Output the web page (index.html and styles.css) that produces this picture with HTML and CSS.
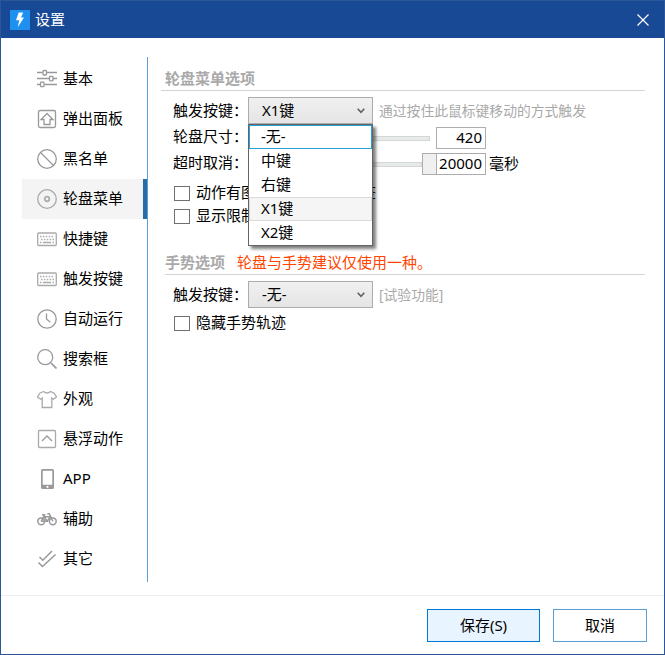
FILE: index.html
```html
<!DOCTYPE html>
<html lang="zh-CN">
<head>
<meta charset="utf-8">
<title>设置</title>
<link rel="stylesheet" href="styles.css">
</head>
<body>
<div class="window">
  <header class="titlebar">
    <svg class="logo" viewBox="0 0 20 20"><rect width="20" height="20" fill="#1e90f0"/><path d="M8.700 2.600h4.500L11 7.400h3L7.800 17.200l1.400-7H6z" fill="#fff"/></svg>
    <h1 class="title">设置</h1>
    <svg class="close" viewBox="0 0 12 12"><path d="M.5 .5l11 11M11.5 .5l-11 11"/></svg>
  </header>

  <div class="body">
    <nav class="nav">
      <a class="nav-item"><svg viewBox="0 0 20 20"><path d="M0 3.500h5.500M9.500 3.500H20M0 9.500h12M16 9.500h4M0 15.500h3.500M7.500 15.500H20"/><rect x="6" y="1.500" width="3.500" height="4.500" rx=".8"/><rect x="12.500" y="7.300" width="3.500" height="4.500" rx=".8"/><rect x="3.500" y="13.200" width="3.500" height="4.500" rx=".8"/></svg><span>基本</span></a>
      <a class="nav-item"><svg viewBox="0 0 20 20"><rect x="1.500" y="1.500" width="17" height="17" rx="1.500"/><path d="M10 4.500l6 6h-3v5H7v-5H4z"/></svg><span>弹出面板</span></a>
      <a class="nav-item"><svg viewBox="0 0 20 20"><circle cx="10" cy="10" r="9.300"/><path d="M3.500 3.500l13 13"/></svg><span>黑名单</span></a>
      <a class="nav-item selected"><svg viewBox="0 0 20 20" class="pale"><circle cx="10" cy="10" r="9.300"/><circle cx="10" cy="10" r="2.300" class="bold"/></svg><span>轮盘菜单</span></a>
      <a class="nav-item"><svg viewBox="0 0 20 20" class="pale"><rect x=".7" y="4" width="18.600" height="12.500" rx="1"/><path class="keys" d="M3 7.500h14M4 10.500h13"/><path d="M3 13.500h1.500M6 13.500h8M15.500 13.500H17"/></svg><span>快捷键</span></a>
      <a class="nav-item"><svg viewBox="0 0 20 20" class="pale"><rect x=".7" y="4" width="18.600" height="12.500" rx="1"/><path class="keys" d="M3 7.500h14M4 10.500h13"/><path d="M3 13.500h1.500M6 13.500h8M15.500 13.500H17"/></svg><span>触发按键</span></a>
      <a class="nav-item"><svg viewBox="0 0 20 20"><circle cx="10" cy="10" r="9.200"/><path d="M9.500 4.500V10l3.800 3.200"/></svg><span>自动运行</span></a>
      <a class="nav-item"><svg viewBox="0 0 20 20"><circle cx="8.200" cy="8.200" r="7.500"/><path class="bold" d="M14 14l5.500 5.500"/></svg><span>搜索框</span></a>
      <a class="nav-item"><svg viewBox="0 0 20 20" class="pale"><path d="M6.500 2.500L2.800 4.200 .5 8l3.200 2.300 1.500-1.200v9.400h9.600V9.100l1.500 1.200L19.500 8l-2.300-3.800-3.700-1.700Q10 5.500 6.500 2.500z"/></svg><span>外观</span></a>
      <a class="nav-item"><svg viewBox="0 0 20 20"><rect x="1.500" y="1.500" width="17" height="17" rx="1" class="pale"/><path d="M5 12l5-5 5 5"/></svg><span>悬浮动作</span></a>
      <a class="nav-item"><svg viewBox="0 0 20 20"><path class="solid" fill-rule="evenodd" d="M5.500 0h10a1.500 1.500 0 0 1 1.500 1.500v17a1.500 1.500 0 0 1-1.500 1.500h-10A1.500 1.500 0 0 1 4 18.500v-17A1.500 1.500 0 0 1 5.500 0zM5.700 1.700v14h9.600v-14zM10.500 16.700a1.100 1.100 0 1 0 .01 0z"/></svg><span>APP</span></a>
      <a class="nav-item"><svg viewBox="0 0 20 20"><g class="bike"><circle cx="4.200" cy="12.300" r="3.400"/><circle cx="15.800" cy="12.300" r="3.400"/><path d="M4.200 12.300L7 7.200l3.200 5.100H4.200M7.300 7.800h5.800l-3 4.500M15.800 12.300L12.300 4.800h-2M5 5.800h3.500M7 7.200l-.4-1.400"/></g></svg><span>辅助</span></a>
      <a class="nav-item"><svg viewBox="0 0 20 20"><path class="check-marks" d="M2.500 8l3.300 3.200L15 2M1.500 13.500l4 4L18.500 5.500"/></svg><span>其它</span></a>
    </nav>

    <main class="content">
      <section class="group">
        <h2 class="group-head">轮盘菜单选项</h2>
        <div class="row combo-row">
          <span class="label">触发按键：</span>
          <div class="combo">
            <span class="value">X1键</span>
            <svg class="chevron" viewBox="0 0 8 6"><path d="M.7 .8L4 4.300 7.300 .8"/></svg>
            <ul class="menu">
              <li class="option current">-无-</li>
              <li class="option">中键</li>
              <li class="option">右键</li>
              <li class="option chosen">X1键</li>
              <li class="option">X2键</li>
            </ul>
          </div>
          <span class="hint">通过按住此鼠标键移动的方式触发</span>
        </div>
        <div class="row slider-row">
          <span class="label">轮盘尺寸：</span>
          <div class="slider"><div class="track"></div></div>
          <div class="number">420</div>
        </div>
        <div class="row slider-row">
          <span class="label">超时取消：</span>
          <div class="slider slider-full"><div class="track"></div><div class="thumb"></div></div>
          <div class="number">20000</div>
          <span class="unit">毫秒</span>
        </div>
        <div class="checks">
          <label class="check"><i class="box"></i><span>动作有图标时，不显示标签</span></label>
          <label class="check"><i class="box"></i><span>显示限制</span></label>
        </div>
      </section>

      <section class="group gestures">
        <h2 class="group-head">手势选项<em class="warning">轮盘与手势建议仅使用一种。</em></h2>
        <div class="row combo-row">
          <span class="label">触发按键：</span>
          <div class="combo">
            <span class="value">-无-</span>
            <svg class="chevron" viewBox="0 0 8 6"><path d="M.7 .8L4 4.300 7.300 .8"/></svg>
          </div>
          <span class="hint">[试验功能]</span>
        </div>
        <div class="checks">
          <label class="check"><i class="box"></i><span>隐藏手势轨迹</span></label>
        </div>
      </section>
    </main>
  </div>

  <footer class="footer">
    <button class="btn save">保存(S)</button>
    <button class="btn">取消</button>
  </footer>
</div>
</body>
</html>
```
FILE: styles.css
```css
* { box-sizing: border-box; }

body {
  margin: 0;
  font: 15px/20px "Noto Sans", "Noto Sans CJK SC", sans-serif;
  color: #000;
}

.window {
  width: 665px;
  height: 655px;
  display: flex;
  flex-direction: column;
  border: 1px solid #2b579a;
  background: #fff;
  overflow: hidden;
}

.titlebar {
  height: 37px;
  flex: none;
  display: flex;
  align-items: center;
  padding: 0 15px 0 9px;
  background: #174994;
  color: #fff;
}
.logo { width: 20px; height: 20px; }
.title { margin: 0 auto 0 5px; padding-bottom: 2px; font-size: 15px; font-weight: 400; }
.close { width: 12px; height: 12px; fill: none; stroke: #fff; stroke-width: 1.2; }

.body { flex: 1; display: flex; padding-left: 21px; }

.nav {
  width: 126px;
  height: 525px;
  margin-top: 19px;
  padding-top: 2px;
  border-right: 1px solid #5a9fd8;
}
.nav-item {
  height: 40px;
  display: flex;
  align-items: center;
  gap: 6px;
  padding-left: 15px;
}
.nav-item span { padding-bottom: 2px; }
.nav-item.selected { background: #f4f4f4; border-right: 4px solid #286ba8; }
.nav-item svg {
  width: 20px;
  height: 20px;
  fill: none;
  stroke: #999;
  stroke-width: 1.3;
}
.nav-item .pale { stroke: #aaa; }
.nav-item .bold { stroke-width: 1.7; }
.nav-item .check-marks { stroke-width: 1.5; }
.nav-item .keys { stroke-width: 1.5; stroke-dasharray: 1.5 1.4; }
.nav-item .solid { fill: #999; stroke: none; }
.nav-item .bike { stroke: #999; stroke-width: 1.5; }

.content { width: 484px; margin: 31px 0 0 13px; }

.group-head {
  height: 22px;
  margin: 0;
  padding-left: 4px;
  border-bottom: 1px solid #d3d3d3;
  font-size: 15px;
  font-weight: 700;
  line-height: 18px;
  color: #a9a9a9;
}
.warning { margin-left: 12px; font-style: normal; font-weight: 400; color: #ff4500; }

.row { height: 26px; display: flex; align-items: center; padding-left: 12px; }
.combo-row { height: 27px; margin-top: 6px; }
.slider-row { padding-top: 2px; }
.label { width: 75px; padding-bottom: 2px; white-space: nowrap; }
.slider-row .label { padding-bottom: 4px; }

.combo {
  position: relative;
  width: 125px;
  height: 27px;
  display: flex;
  align-items: center;
  justify-content: space-between;
  padding: 0 7px 0 13px;
  border: 1px solid #acacac;
  background: linear-gradient(#f0f0f0, #e5e5e5);
}
.value { padding-bottom: 2px; }
.chevron { width: 8px; height: 6px; fill: none; stroke: #606060; stroke-width: 1.6; }
.hint { margin-left: 6px; font-size: 13.8px; color: #a9a9a9; }

.menu {
  position: absolute;
  z-index: 1;
  top: 26px;
  left: -1px;
  width: 125px;
  margin: 0;
  padding: 0;
  border: 1px solid #646464;
  background: #fff;
  box-shadow: 3px 3px 3px rgba(0, 0, 0, .5);
  list-style: none;
}
.option { height: 24px; padding-left: 11px; border: 1px solid transparent; line-height: 20px; }
.option.current { border-color: #26a0da; }
.option.chosen { border-color: #dadada; background: #f5f5f5; }

.slider { width: 188px; display: flex; align-items: center; padding-right: 6px; }
.slider-full { padding-right: 0; }
.track { flex: 1; height: 5px; border: 1px solid #d6d6d6; background: #e7eaea; }
.thumb { width: 15px; height: 22px; margin-right: -1px; border: 1px solid #acacac; background: #f0f0f0; }
.number {
  width: 50px;
  height: 22px;
  padding-right: 3px;
  border: 1px solid #abadb3;
  background: #fff;
  line-height: 18px;
  text-align: right;
}
.unit { margin-left: 3px; padding-bottom: 2px; }

.checks { padding: 6px 0 0 13px; }
.check { height: 23px; display: flex; align-items: center; gap: 6px; white-space: nowrap; }
.check span { padding-bottom: 3px; }
.box { width: 16px; height: 15px; border: 1px solid #707070; background: #fff; }

.gestures { width: 480px; margin: 25px 0 0 4px; }
.gestures .group-head { padding-left: 0; }
.gestures .row { padding-left: 8px; }
.gestures .checks { padding: 4px 0 0 9px; }

.footer {
  height: 59px;
  flex: none;
  display: flex;
  justify-content: flex-end;
  gap: 13px;
  padding: 13px 17px 0 0;
  border-top: 1px solid #efefef;
}
.btn {
  width: 94px;
  height: 33px;
  padding: 0 0 2px;
  border: 1px solid #5a9fd8;
  background: #fff;
  font: inherit;
  color: #000;
}
.btn.save { width: 113px; border-color: #0078d7; background: #e8f4ff; }
```
